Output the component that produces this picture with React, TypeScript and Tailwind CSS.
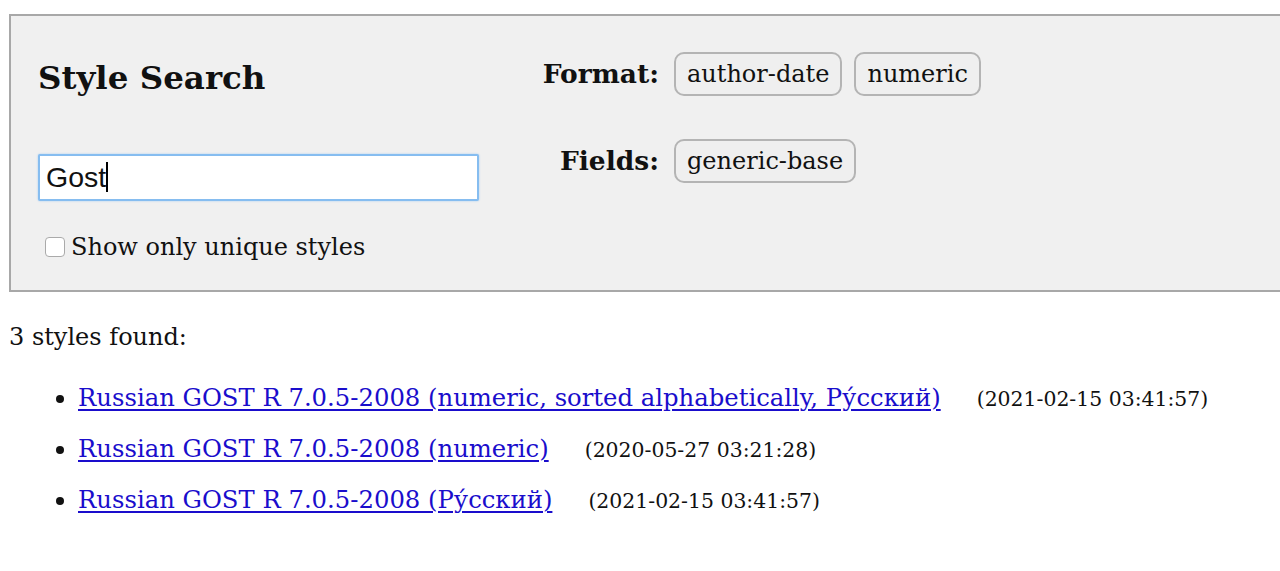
const results = [
  { title: "Russian GOST R 7.0.5-2008 (numeric, sorted alphabetically, Ру́сский)", date: "(2021-02-15 03:41:57)" },
  { title: "Russian GOST R 7.0.5-2008 (numeric)", date: "(2020-05-27 03:21:28)" },
  { title: "Russian GOST R 7.0.5-2008 (Ру́сский)", date: "(2021-02-15 03:41:57)" },
];

function Chip({ label }: { label: string }) {
  return (
    <button className="h-[44px] px-[11px] rounded-[10px] border-2 border-[#b4b4b4] bg-[#efefef] text-[24px] text-[#111] leading-none">
      {label}
    </button>
  );
}

export default function App() {
  return (
    <div className="min-h-[571px] bg-white text-[#111] font-['DejaVu_Serif',Georgia,serif]">
      <div className="pt-[14px] pl-[9px]">
        {/* Search panel */}
        <div className="h-[278px] border-2 border-r-0 border-[#a8a8a8] bg-[#f0f0f0] flex">
          <div className="w-[510px] pl-[27px] pt-[46px]">
            <h1 className="text-[32.5px] font-bold leading-none">Style Search</h1>
            <div className="mt-[59px] w-[441px] h-[47px] border-2 border-[#86bdf0] rounded-[2px] bg-white flex items-center px-[6px] shadow-[0_0_2px_#9cc8f2]">
              <span className="font-['Liberation_Sans',Arial,sans-serif] text-[28.5px] text-[#111]">Gost</span>
              <span className="w-[1.5px] h-[30px] bg-black"></span>
            </div>
            <label className="mt-[28px] ml-[7px] flex items-center gap-[6px] text-[24px]">
              <span className="w-[20px] h-[20px] rounded-[4px] border border-[#aaa] bg-white"></span>
              Show only unique styles
            </label>
          </div>
          <div className="pt-[36px] grid grid-cols-[138px_auto] gap-x-[15px] gap-y-[43px] content-start">
            <span className="text-right font-bold text-[26.5px] self-center">Format:</span>
            <div className="flex gap-[12px]">
              <Chip label="author-date" />
              <Chip label="numeric" />
            </div>
            <span className="text-right font-bold text-[26.5px] self-center">Fields:</span>
            <div className="flex">
              <Chip label="generic-base" />
            </div>
          </div>
        </div>

        {/* Results */}
        <p className="mt-[33px] text-[24px] leading-none">3 styles found:</p>
        <ul className="mt-[34px] pl-[69px] list-disc flex flex-col gap-[20px]">
          {results.map((r) => (
            <li key={r.date + r.title} className="text-[24.3px] leading-[30px]">
              <a href="#" className="text-[#1a0dcc] underline underline-offset-[3px] decoration-[1.5px]">{r.title}</a>
              <span className="ml-[36px] text-[20.4px]">{r.date}</span>
            </li>
          ))}
        </ul>
      </div>
    </div>
  );
}
